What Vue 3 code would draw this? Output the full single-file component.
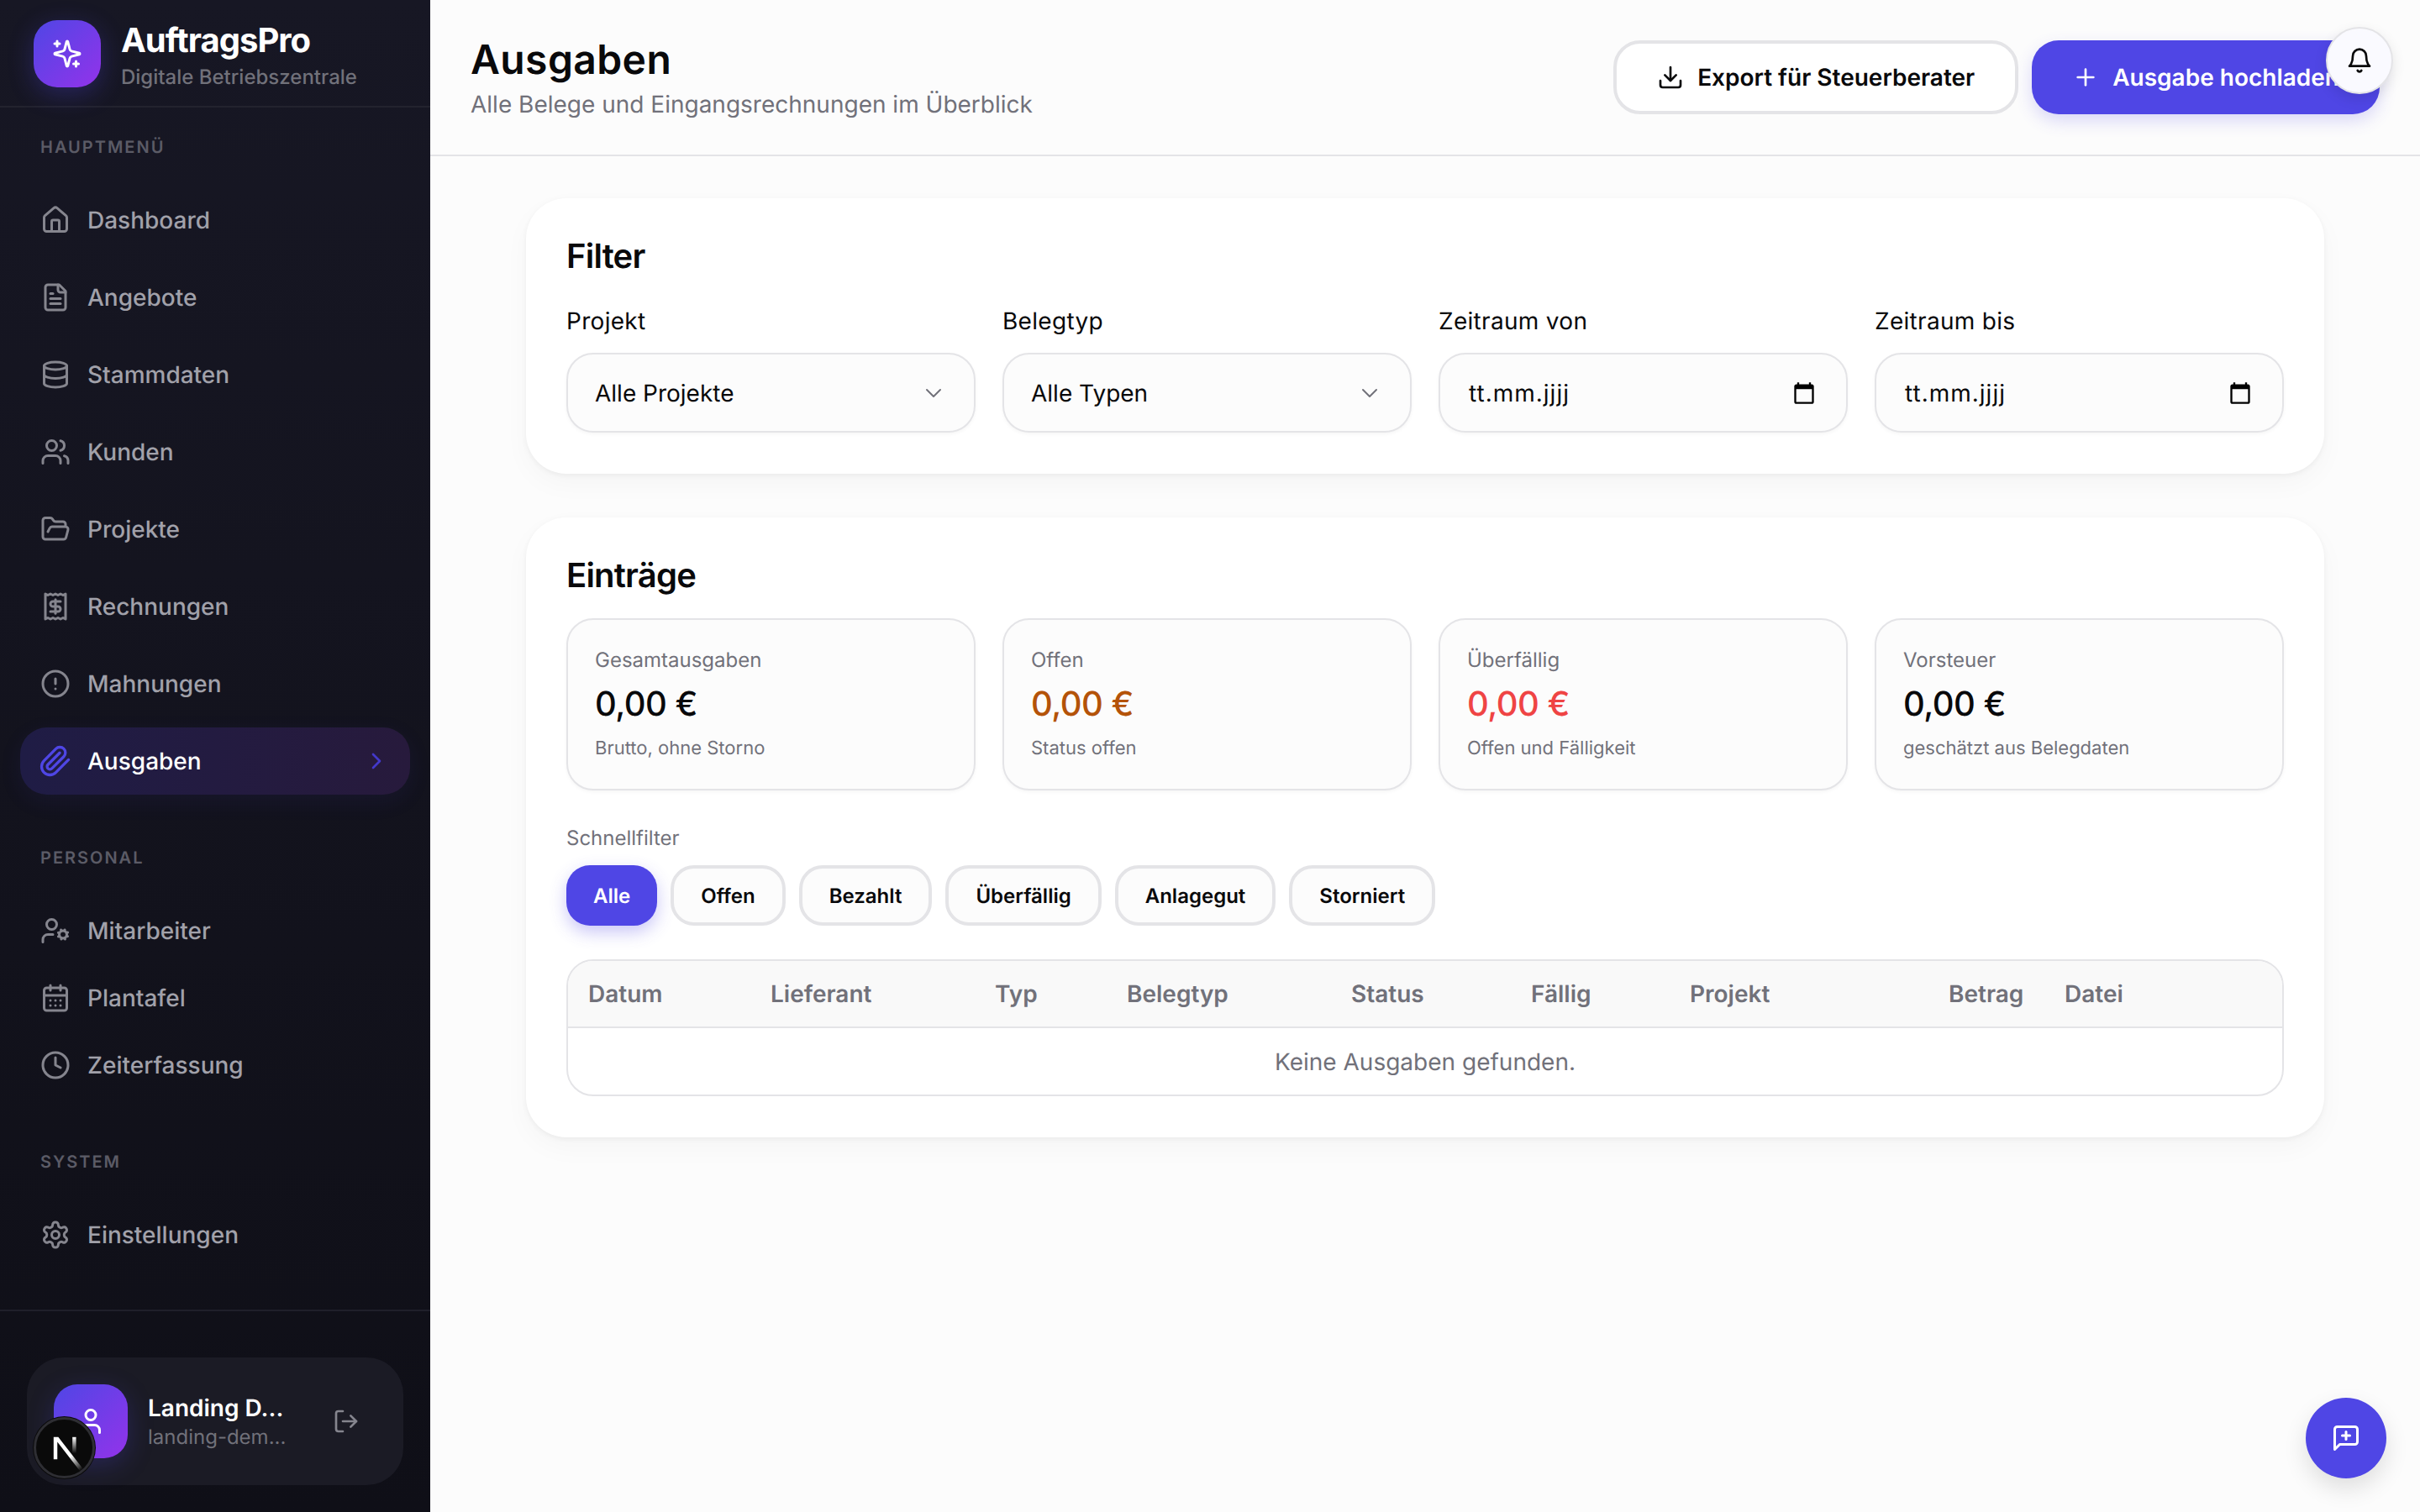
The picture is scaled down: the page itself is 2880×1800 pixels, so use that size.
<script setup>
const s = (...p) => p.map(d => `<path d="${d}"/>`).join('')
const icons = {
  sparkle: s('M9.937 15.5A2 2 0 0 0 8.5 14.063l-6.135-1.582a.5.5 0 0 1 0-.962L8.5 9.936A2 2 0 0 0 9.937 8.5l1.582-6.135a.5.5 0 0 1 .963 0L14.063 8.5A2 2 0 0 0 15.5 9.937l6.135 1.581a.5.5 0 0 1 0 .964L15.5 14.063a2 2 0 0 0-1.437 1.437l-1.582 6.135a.5.5 0 0 1-.963 0z', 'M4 2v4', 'M6 4H2', 'M19 18v4', 'M21 20h-4'),
  house: s('M15 21v-8a1 1 0 0 0-1-1h-4a1 1 0 0 0-1 1v8', 'M3 10a2 2 0 0 1 .709-1.528l7-5.999a2 2 0 0 1 2.582 0l7 5.999A2 2 0 0 1 21 10v9a2 2 0 0 1-2 2H5a2 2 0 0 1-2-2z'),
  file: s('M15 2H6a2 2 0 0 0-2 2v16a2 2 0 0 0 2 2h12a2 2 0 0 0 2-2V7Z', 'M14 2v4a2 2 0 0 0 2 2h4', 'M10 9H8', 'M16 13H8', 'M16 17H8'),
  database: '<ellipse cx="12" cy="5" rx="9" ry="3"/>' + s('M3 5V19A9 3 0 0 0 21 19V5', 'M3 12A9 3 0 0 0 21 12'),
  users: s('M16 21v-2a4 4 0 0 0-4-4H6a4 4 0 0 0-4 4v2', 'M22 21v-2a4 4 0 0 0-3-3.87', 'M16 3.13a4 4 0 0 1 0 7.75') + '<circle cx="9" cy="7" r="4"/>',
  folder: s('m6 14 1.5-2.9A2 2 0 0 1 9.24 10H20a2 2 0 0 1 1.94 2.5l-1.54 6a2 2 0 0 1-1.95 1.5H4a2 2 0 0 1-2-2V5a2 2 0 0 1 2-2h3.9a2 2 0 0 1 1.69.9l.81 1.2a2 2 0 0 0 1.67.9H18a2 2 0 0 1 2 2v2'),
  receipt: s('M4 2v20l2-1 2 1 2-1 2 1 2-1 2 1 2-1 2 1V2l-2 1-2-1-2 1-2-1-2 1-2-1-2 1Z', 'M16 8h-6a2 2 0 1 0 0 4h4a2 2 0 1 1 0 4H8', 'M12 17.5v-11'),
  alert: '<circle cx="12" cy="12" r="10"/>' + s('M12 8v4', 'M12 16h.01'),
  clip: s('m21.44 11.05-9.19 9.19a6 6 0 0 1-8.49-8.49l8.57-8.57A4 4 0 1 1 18 8.84l-8.59 8.57a2 2 0 0 1-2.83-2.83l8.49-8.48'),
  chevron: s('m9 18 6-6-6-6'),
  down: s('m6 9 6 6 6-6'),
  usercog: '<circle cx="18" cy="15" r="3"/><circle cx="9" cy="7" r="4"/>' + s('M10 15H6a4 4 0 0 0-4 4v2', 'm21.7 16.4-.9-.3', 'm15.2 13.9-.9-.3', 'm16.6 18.7.3-.9', 'm19.1 12.2.3-.9', 'm19.6 18.7-.4-1', 'm16.8 12.3-.4-1', 'm14.3 16.6 1-.4', 'm20.7 13.8 1-.4'),
  calendar: '<rect x="3" y="4" width="18" height="18" rx="2"/>' + s('M8 2v4', 'M16 2v4', 'M3 10h18', 'M8 14h.01', 'M12 14h.01', 'M16 14h.01', 'M8 18h.01', 'M12 18h.01', 'M16 18h.01'),
  clock: '<circle cx="12" cy="12" r="10"/>' + s('M12 6v6l4 2'),
  settings: '<circle cx="12" cy="12" r="3"/>' + s('M12.22 2h-.44a2 2 0 0 0-2 2v.18a2 2 0 0 1-1 1.73l-.43.25a2 2 0 0 1-2 0l-.15-.08a2 2 0 0 0-2.73.73l-.22.38a2 2 0 0 0 .73 2.73l.15.1a2 2 0 0 1 1 1.72v.51a2 2 0 0 1-1 1.74l-.15.09a2 2 0 0 0-.73 2.73l.22.38a2 2 0 0 0 2.73.73l.15-.08a2 2 0 0 1 2 0l.43.25a2 2 0 0 1 1 1.73V20a2 2 0 0 0 2 2h.44a2 2 0 0 0 2-2v-.18a2 2 0 0 1 1-1.73l.43-.25a2 2 0 0 1 2 0l.15.08a2 2 0 0 0 2.73-.73l.22-.39a2 2 0 0 0-.73-2.73l-.15-.08a2 2 0 0 1-1-1.74v-.5a2 2 0 0 1 1-1.74l.15-.09a2 2 0 0 0 .73-2.73l-.22-.38a2 2 0 0 0-2.73-.73l-.15.08a2 2 0 0 1-2 0l-.43-.25a2 2 0 0 1-1-1.73V4a2 2 0 0 0-2-2z'),
  user: '<circle cx="12" cy="7" r="4"/>' + s('M19 21v-2a4 4 0 0 0-4-4H9a4 4 0 0 0-4 4v2'),
  logout: s('M9 21H5a2 2 0 0 1-2-2V5a2 2 0 0 1 2-2h4', 'm16 17 5-5-5-5', 'M21 12H9'),
  download: s('M21 15v4a2 2 0 0 1-2 2H5a2 2 0 0 1-2-2v-4', 'm7 10 5 5 5-5', 'M12 15V3'),
  plus: s('M5 12h14', 'M12 5v14'),
  bell: s('M6 8a6 6 0 0 1 12 0c0 7 3 9 3 9H3s3-2 3-9', 'M10.3 21a1.94 1.94 0 0 0 3.4 0'),
  chat: s('M21 15a2 2 0 0 1-2 2H7l-4 4V5a2 2 0 0 1 2-2h14a2 2 0 0 1 2 2z', 'M12 7v6', 'M9 10h6')
}
const sections = [
  { label: 'Hauptmenü', roomy: true, items: [
    { t: 'Dashboard', i: 'house' }, { t: 'Angebote', i: 'file' }, { t: 'Stammdaten', i: 'database' },
    { t: 'Kunden', i: 'users' }, { t: 'Projekte', i: 'folder' }, { t: 'Rechnungen', i: 'receipt' },
    { t: 'Mahnungen', i: 'alert' }, { t: 'Ausgaben', i: 'clip', active: true }
  ] },
  { label: 'Personal', items: [{ t: 'Mitarbeiter', i: 'usercog' }, { t: 'Plantafel', i: 'calendar' }, { t: 'Zeiterfassung', i: 'clock' }] },
  { label: 'System', items: [{ t: 'Einstellungen', i: 'settings' }] }
]
const filters = [
  { label: 'Projekt', value: 'Alle Projekte', type: 'select' },
  { label: 'Belegtyp', value: 'Alle Typen', type: 'select' },
  { label: 'Zeitraum von', value: 'tt.mm.jjjj', type: 'date' },
  { label: 'Zeitraum bis', value: 'tt.mm.jjjj', type: 'date' }
]
const stats = [
  { l: 'Gesamtausgaben', v: '0,00 €', s: 'Brutto, ohne Storno' },
  { l: 'Offen', v: '0,00 €', s: 'Status offen', c: 'orange' },
  { l: 'Überfällig', v: '0,00 €', s: 'Offen und Fälligkeit', c: 'red' },
  { l: 'Vorsteuer', v: '0,00 €', s: 'geschätzt aus Belegdaten' }
]
const pills = ['Alle', 'Offen', 'Bezahlt', 'Überfällig', 'Anlagegut', 'Storniert']
const cols = [
  { t: 'Datum', w: 217 }, { t: 'Lieferant', w: 267 }, { t: 'Typ', w: 157 }, { t: 'Belegtyp', w: 267 },
  { t: 'Status', w: 214 }, { t: 'Fällig', w: 189 }, { t: 'Projekt', w: 308 }, { t: 'Betrag', w: 138 }, { t: 'Datei', w: 0 }
]
</script>

<template>
  <div class="app">
    <aside class="side">
      <div class="brand">
        <div class="logo"><svg class="ic logo-ic" viewBox="0 0 24 24" v-html="icons.sparkle"></svg></div>
        <div>
          <div class="brand-name">AuftragsPro</div>
          <div class="brand-sub">Digitale Betriebszentrale</div>
        </div>
      </div>
      <nav class="nav">
        <section v-for="sec in sections" :key="sec.label" class="sec" :class="{ roomy: sec.roomy }">
          <div class="sec-label">{{ sec.label }}</div>
          <div class="sec-items">
            <a v-for="it in sec.items" :key="it.t" class="item" :class="{ active: it.active }">
              <svg class="ic nav-ic" viewBox="0 0 24 24" v-html="icons[it.i]"></svg>
              <span>{{ it.t }}</span>
              <svg v-if="it.active" class="ic nav-chev" viewBox="0 0 24 24" v-html="icons.chevron"></svg>
            </a>
          </div>
        </section>
      </nav>
      <div class="foot">
        <div class="user">
          <div class="avatar"><svg class="ic av-ic" viewBox="0 0 24 24" v-html="icons.user"></svg></div>
          <div class="user-text">
            <div class="user-name">Landing D...</div>
            <div class="user-mail">landing-dem...</div>
          </div>
          <svg class="ic out-ic" viewBox="0 0 24 24" v-html="icons.logout"></svg>
        </div>
      </div>
      <div class="next">
        <svg class="next-logo" viewBox="0 0 180 180" fill="none" aria-label="Next.js">
          <path d="M149.508 157.52L69.142 54H54V125.97H66.1136V69.3836L139.999 164.845C143.333 162.614 146.509 160.165 149.508 157.52Z" fill="url(#next-a)"/>
          <rect x="115" y="54" width="12" height="72" fill="url(#next-b)"/>
          <defs>
            <linearGradient id="next-a" x1="109" y1="116.5" x2="144.5" y2="160.5" gradientUnits="userSpaceOnUse">
              <stop stop-color="#fff"/><stop offset="1" stop-color="#fff" stop-opacity="0"/>
            </linearGradient>
            <linearGradient id="next-b" x1="121" y1="54" x2="120.8" y2="106.9" gradientUnits="userSpaceOnUse">
              <stop stop-color="#fff"/><stop offset="1" stop-color="#fff" stop-opacity="0"/>
            </linearGradient>
          </defs>
        </svg>
      </div>
    </aside>

    <main class="main">
      <header class="top">
        <div>
          <h1>Ausgaben</h1>
          <p>Alle Belege und Eingangsrechnungen im Überblick</p>
        </div>
        <div class="actions">
          <button class="btn ghost"><svg class="ic btn-ic" viewBox="0 0 24 24" v-html="icons.download"></svg>Export für Steuerberater</button>
          <button class="btn primary"><svg class="ic btn-ic" viewBox="0 0 24 24" v-html="icons.plus"></svg>Ausgabe hochladen</button>
        </div>
      </header>

      <div class="content">
        <section class="card">
          <h2>Filter</h2>
          <div class="grid">
            <div v-for="f in filters" :key="f.label">
              <div class="f-label">{{ f.label }}</div>
              <div class="control" :class="f.type">
                <span>{{ f.value }}</span>
                <svg v-if="f.type === 'select'" class="ic sel-ic" viewBox="0 0 24 24" v-html="icons.down"></svg>
                <svg v-else class="cal" viewBox="0 0 24 24"><path d="M20 3h-1V1h-2v2H7V1H5v2H4c-1.1 0-2 .9-2 2v16c0 1.1.9 2 2 2h16c1.1 0 2-.9 2-2V5c0-1.1-.9-2-2-2zm0 18H4V8h16v13z"/></svg>
              </div>
            </div>
          </div>
        </section>

        <section class="card">
          <h2 class="h-entries">Einträge</h2>
          <div class="grid">
            <div v-for="st in stats" :key="st.l" class="stat">
              <div class="st-l">{{ st.l }}</div>
              <div class="st-v" :class="st.c">{{ st.v }}</div>
              <div class="st-s">{{ st.s }}</div>
            </div>
          </div>
          <div class="qf-label">Schnellfilter</div>
          <div class="pills">
            <button v-for="(p, i) in pills" :key="p" class="pill" :class="{ on: i === 0 }">{{ p }}</button>
          </div>
          <div class="table">
            <div class="thead">
              <span v-for="c in cols" :key="c.t" class="th" :class="{ fill: !c.w }" :style="c.w ? { width: c.w + 'px' } : null">{{ c.t }}</span>
            </div>
            <div class="empty">Keine Ausgaben gefunden.</div>
          </div>
        </section>
      </div>
    </main>

    <button class="bell"><svg class="ic bell-ic" viewBox="0 0 24 24" v-html="icons.bell"></svg></button>
    <button class="fab"><svg class="ic fab-ic" viewBox="0 0 24 24" v-html="icons.chat"></svg></button>
  </div>
</template>

<style>
html, body { margin: 0; background: #fcfcfc; }
</style>

<style scoped>
.app { display: flex; width: 2880px; height: 1800px; overflow: hidden; font-family: Inter, "Liberation Sans", sans-serif; color: #09090b; background: #fcfcfc; text-rendering: geometricPrecision; }
.ic { fill: none; stroke: currentColor; stroke-width: 2; stroke-linecap: round; stroke-linejoin: round; flex: none; }

.side { position: relative; width: 512px; flex: none; height: 1800px; display: flex; flex-direction: column; background: linear-gradient(180deg, #171724 0%, #0f0f17 100%); }
.brand { height: 128px; box-sizing: border-box; padding: 24px 40px 0; display: flex; gap: 24px; border-bottom: 2px solid #23232e; }
.logo { width: 80px; height: 80px; border-radius: 28px; display: flex; align-items: center; justify-content: center; background: linear-gradient(135deg, #4f46e5, #9333ea); box-shadow: 0 8px 30px rgba(79, 70, 229, .3); }
.logo-ic { width: 36px; height: 36px; color: #fff; }
.brand-name { font-size: 40px; line-height: 48px; font-weight: 700; color: #fff; letter-spacing: -1px; }
.brand-sub { font-size: 24px; line-height: 34px; font-weight: 500; color: #71717a; margin-top: 3px; }

.nav { flex: 1; padding: 33px 24px 0; }
.sec { margin-top: 61px; }
.sec.roomy { margin-top: 0; }
.sec-label { font-size: 20px; line-height: 28px; font-weight: 600; letter-spacing: 2px; text-transform: uppercase; color: #5b5b66; padding-left: 24px; margin-bottom: 33px; }
.sec-items { display: flex; flex-direction: column; }
.roomy .sec-items { gap: 12px; }
.item { height: 80px; border-radius: 32px; display: flex; align-items: center; gap: 20px; padding: 0 24px; font-size: 28px; font-weight: 500; color: #a1a1aa; }
.nav-ic { width: 36px; height: 36px; color: #85858e; }
.item.active { color: #fff; background: linear-gradient(90deg, #1f1c45, #271a3c); box-shadow: 0 8px 28px rgba(79, 70, 229, .08); }
.item.active .nav-ic { color: #4f46e5; transform: scale(1.1); }
.nav-chev { width: 32px; height: 32px; margin-left: auto; color: #4338ca; }

.foot { height: 241px; box-sizing: border-box; border-top: 2px solid #1f1f2a; padding: 55px 32px 0; }
.user { height: 152px; border-radius: 44px; background: #1b1b25; display: flex; align-items: center; padding: 0 32px; gap: 24px; }
.avatar { width: 88px; height: 88px; border-radius: 28px; display: flex; align-items: center; justify-content: center; background: linear-gradient(135deg, #4f46e5, #9333ea); box-shadow: 0 8px 30px rgba(79, 70, 229, .25); }
.av-ic { width: 36px; height: 36px; color: #fff; }
.user-text { flex: 1; min-width: 0; }
.user-name { font-size: 28px; line-height: 36px; font-weight: 600; color: #fff; }
.user-mail { font-size: 24px; line-height: 32px; color: #71717a; margin-top: 1px; }
.out-ic { width: 32px; height: 32px; color: #85858e; margin-right: 20px; }
.next { position: absolute; left: 40px; top: 1687px; width: 73px; height: 73px; box-sizing: border-box; border-radius: 50%; background: #0a0a0a; border: 3px solid #2e2e33; display: flex; align-items: center; justify-content: center; box-shadow: 0 0 0 1px #0a0a0a; }
.next-logo { width: 66px; height: 66px; flex: none; }

.main { flex: 1; min-width: 0; display: flex; flex-direction: column; }
.top { height: 186px; box-sizing: border-box; border-bottom: 2px solid #e4e4e7; padding: 0 48px; display: flex; justify-content: space-between; align-items: center; }
h1 { margin: 2px 0 0; font-size: 48px; line-height: 62px; font-weight: 600; letter-spacing: .4px; }
.top p { margin: 0; font-size: 28px; line-height: 44px; color: #71717a; }
.actions { display: flex; gap: 16px; }
.btn { height: 88px; box-sizing: border-box; border-radius: 32px; font: 600 28px Inter, sans-serif; text-rendering: geometricPrecision; display: flex; align-items: center; gap: 16px; padding: 0 48px; }
.btn-ic { width: 32px; height: 32px; }
.ghost { background: #fff; color: #09090b; border: 4px solid #e4e4e7; }
.primary { background: #4f46e5; color: #fff; border: 0; box-shadow: 0 8px 20px rgba(79, 70, 229, .2); }

.content { width: 2140px; align-self: center; display: flex; flex-direction: column; gap: 52px; padding-top: 50px; }
.card { background: #fff; border-radius: 48px; padding: 42px 48px 49px; box-shadow: 0 2px 6px rgba(0, 0, 0, .05), 0 12px 32px rgba(0, 0, 0, .03); }
h2 { margin: 0 0 30px; font-size: 40px; line-height: 54px; font-weight: 600; letter-spacing: -.8px; }
.h-entries { margin-bottom: 24px; }
.grid { display: grid; grid-template-columns: repeat(4, 1fr); gap: 32px; }
.f-label { font-size: 28px; line-height: 40px; font-weight: 400; letter-spacing: .3px; margin-bottom: 18px; }
.control { height: 95px; box-sizing: border-box; border: 2px solid #e4e4e7; border-radius: 32px; background: #fcfcfc; display: flex; align-items: center; justify-content: space-between; padding: 0 32px; font-size: 28px; box-shadow: 0 2px 4px rgba(0, 0, 0, .04); }
.date { padding: 0 36px 0 34px; letter-spacing: 1px; }
.sel-ic { width: 32px; height: 32px; color: #71717a; stroke-width: 1.5; }
.cal { width: 28px; height: 28px; fill: #000; }

.stat { height: 205px; box-sizing: border-box; border: 2px solid #e4e4e7; border-radius: 32px; background: #fcfcfc; padding: 30px 32px 0; box-shadow: 0 2px 4px rgba(0, 0, 0, .04); }
.st-l { font-size: 24px; line-height: 36px; color: #71717a; font-weight: 400; }
.st-v { font-size: 40px; line-height: 56px; font-weight: 500; letter-spacing: -.5px; margin-top: 6px; }
.st-v.orange { color: #b45309; }
.st-v.red { color: #ef4444; }
.st-s { font-size: 22px; line-height: 32px; color: #71717a; margin-top: 9px; }
.qf-label { font-size: 24px; line-height: 36px; color: #71717a; margin-top: 39px; }
.pills { display: flex; gap: 16px; margin-top: 14px; }
.pill { height: 72px; box-sizing: border-box; border-radius: 28px; border: 4px solid #e4e4e7; background: #fcfcfc; font: 600 24px Inter, sans-serif; text-rendering: geometricPrecision; color: #09090b; padding: 0 32px; }
.pill.on { background: #4f46e5; border: 0; color: #fff; box-shadow: 0 8px 20px rgba(79, 70, 229, .3); }
.table { margin-top: 40px; border: 2px solid #e4e4e7; border-radius: 32px; overflow: hidden; }
.thead { height: 78px; background: #f9f9f9; border-bottom: 2px solid #e4e4e7; display: flex; align-items: center; padding-left: 24px; font-size: 28px; font-weight: 600; color: #71717a; }
.th { display: block; flex: none; }
.th.fill { flex: 1; }
.empty { height: 79px; display: flex; align-items: center; justify-content: center; font-size: 28px; color: #71717a; }

.bell { position: fixed; right: 32px; top: 32px; width: 80px; height: 80px; border-radius: 50%; background: #fafaff; border: 2px solid #e4e4e7; display: flex; align-items: center; justify-content: center; padding: 0; box-shadow: 0 6px 16px rgba(0, 0, 0, .1); color: #09090b; }
.bell-ic { width: 32px; height: 32px; }
.fab { position: fixed; right: 40px; top: 1664px; width: 96px; height: 96px; border-radius: 50%; border: 0; background: #4f46e5; display: flex; align-items: center; justify-content: center; padding: 0; color: #fff; box-shadow: 0 12px 28px rgba(0, 0, 0, .12); }
.fab-ic { width: 36px; height: 36px; }
</style>
